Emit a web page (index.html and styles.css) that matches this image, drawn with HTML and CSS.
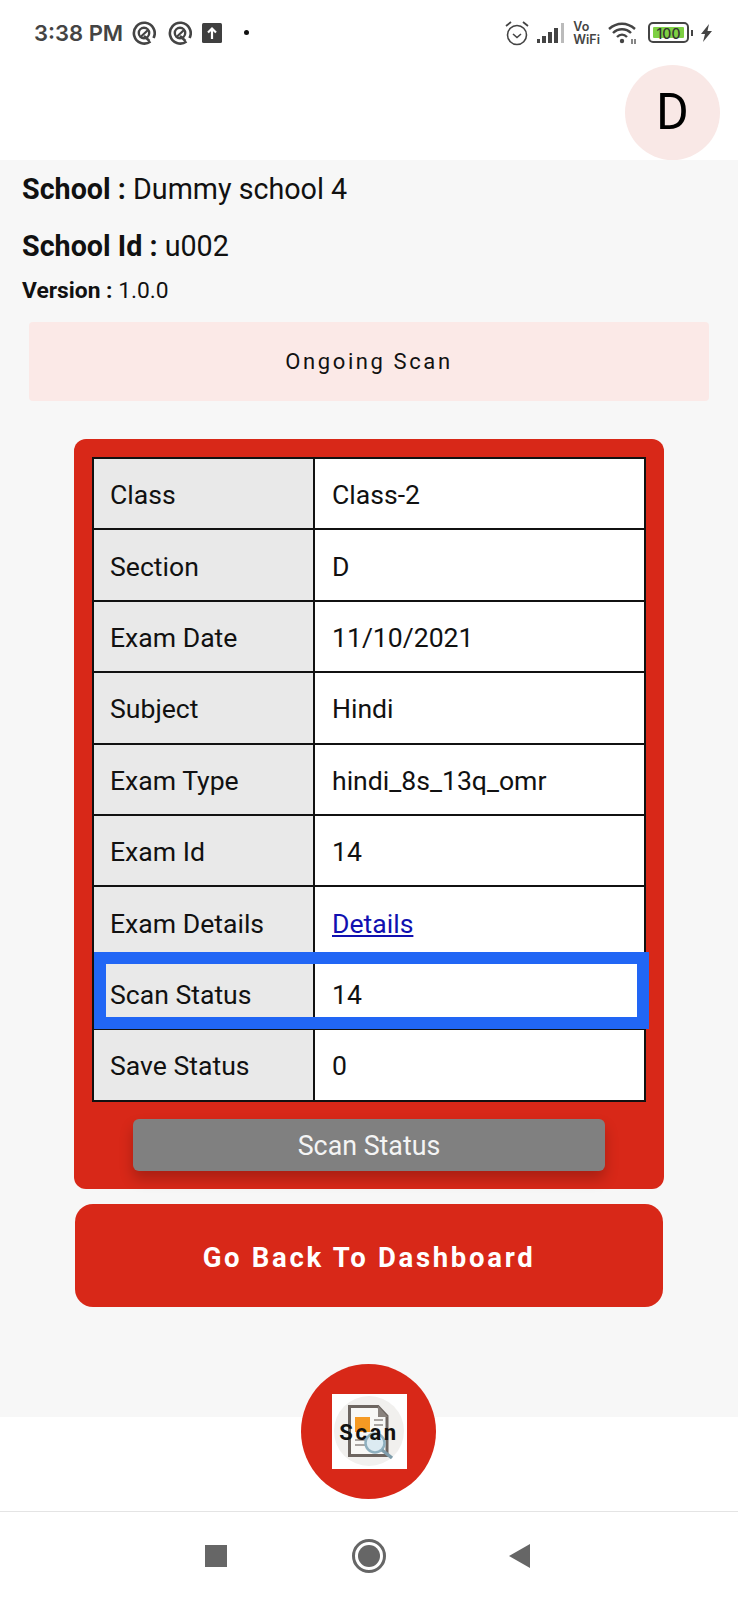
FILE: index.html
```html
<!DOCTYPE html>
<html lang="en">
<head>
    <meta charset="UTF-8">
    <meta name="viewport" content="width=device-width, initial-scale=1.0">
    <title>Ongoing Scan</title>
    <link rel="stylesheet" href="styles.css">
</head>
<body>

    <!-- Phone status bar -->
    <header class="top-bar">
        <div class="status-bar">
            <div class="status-left">
                <span class="clock">3:38 PM</span>
                <svg class="status-icon" width="24" height="24" viewBox="0 0 24 24"><path d="M18.500 20.500A10.400 10.400 0 1 1 21.500 17" fill="none" stroke="#444" stroke-width="2.600"/><circle cx="12" cy="12" r="5.200" fill="none" stroke="#444" stroke-width="2.400"/><path d="M8 16.500L16 9" stroke="#444" stroke-width="2.200" fill="none"/><path d="M12 15l5.500 5" stroke="#444" stroke-width="2.400" fill="none"/></svg>
                <svg class="status-icon second" width="24" height="24" viewBox="0 0 24 24"><path d="M18.500 20.500A10.400 10.400 0 1 1 21.500 17" fill="none" stroke="#444" stroke-width="2.600"/><circle cx="12" cy="12" r="5.200" fill="none" stroke="#444" stroke-width="2.400"/><path d="M8 16.500L16 9" stroke="#444" stroke-width="2.200" fill="none"/><path d="M12 15l5.500 5" stroke="#444" stroke-width="2.400" fill="none"/></svg>
                <svg class="status-icon upload" width="20" height="20" viewBox="0 0 20 20"><rect width="20" height="20" rx="1.500" fill="#3f3f3f"/><path d="M10 16V6M6 9.500L10 5.500l4 4" stroke="#fff" stroke-width="2.200" fill="none"/></svg>
                <span class="dot"></span>
            </div>
            <div class="status-right">
                <svg width="26" height="26" viewBox="0 0 26 26"><circle cx="13" cy="15" r="9.500" fill="none" stroke="#444" stroke-width="1.600"/><path d="M9 14l4 3.500 4-3.500" fill="none" stroke="#444" stroke-width="1.600"/><path d="M2 6l5-4M24 6l-5-4" stroke="#444" stroke-width="1.800"/></svg>
                <svg class="signal" width="28" height="20" viewBox="0 0 28 20"><rect x="0" y="16" width="3" height="4" fill="#444"/><rect x="5" y="13" width="4" height="7" fill="#444"/><rect x="11" y="9" width="4" height="11" fill="#444"/><rect x="17" y="5" width="4" height="15" fill="#444"/><rect x="24" y="0" width="3" height="20" fill="#bbb"/></svg>
                <div class="vowifi">Vo<br>WiFi</div>
                <svg class="wifi" width="30" height="24" viewBox="0 0 30 24"><path d="M1 8c8-7 18-7 26 0M5 12c5-5 13-5 18 0M9 16c3-3 7-3 10 0" fill="none" stroke="#444" stroke-width="2.400"/><circle cx="14" cy="20" r="2.200" fill="#444"/><path d="M24 18v5M27 18v5" stroke="#555" stroke-width="1.400"/></svg>
                <div class="battery"><span class="battery-level">100</span></div>
                <span class="battery-tip"></span>
                <svg class="bolt" width="13" height="18" viewBox="0 0 13 18"><path d="M9 0L1 10h4l-2 8 9-11H7.500z" fill="#444"/></svg>
            </div>
        </div>
        <div class="avatar-row">
            <div class="avatar">D</div>
        </div>
    </header>

    <main class="content">
        <p class="info-line"><strong>School :</strong> Dummy school 4</p>
        <p class="info-line id-line"><strong>School Id :</strong> u002</p>
        <p class="version-line"><strong>Version :</strong> 1.0.0</p>

        <div class="ongoing-box">Ongoing Scan</div>

        <div class="scan-card">
            <div class="scan-table">
                <div class="row"><div class="label">Class</div><div class="value">Class-2</div></div>
                <div class="row"><div class="label">Section</div><div class="value">D</div></div>
                <div class="row"><div class="label">Exam Date</div><div class="value">11/10/2021</div></div>
                <div class="row"><div class="label">Subject</div><div class="value">Hindi</div></div>
                <div class="row"><div class="label">Exam Type</div><div class="value">hindi_8s_13q_omr</div></div>
                <div class="row"><div class="label">Exam Id</div><div class="value">14</div></div>
                <div class="row"><div class="label">Exam Details</div><div class="value"><a href="#">Details</a></div></div>
                <div class="row highlight"><div class="label">Scan Status</div><div class="value">14</div></div>
                <div class="row"><div class="label">Save Status</div><div class="value">0</div></div>
            </div>
            <button type="button" class="status-btn">Scan Status</button>
        </div>

        <button type="button" class="back-btn">Go Back To Dashboard</button>
    </main>

    <footer class="bottom-bar">
        <div class="scan-fab">
            <div class="scan-thumb">
                <svg width="75" height="75" viewBox="0 0 75 75">
                    <circle cx="37" cy="37" r="35" fill="#f1f0ee"/>
                    <path d="M17.500 12.500H46L55 22V61.500H17.500z" fill="#f8f8f6" stroke="#6d6560" stroke-width="3"/>
                    <path d="M46 12V23H56z" fill="#8a837e"/>
                    <rect x="23" y="23" width="15" height="15" fill="#f59a23"/>
                    <path d="M42 26H51M42 31H51M23 46H33M23 51H33" stroke="#a9a5a2" stroke-width="2"/>
                    <circle cx="43" cy="49" r="9.500" fill="#dcebf2" stroke="#8fb0bf" stroke-width="2.500"/>
                    <path d="M50 56L60 64" stroke="#7f9dab" stroke-width="3.500"/>
                </svg>
                <span class="scan-label">Scan</span>
            </div>
        </div>
        <div class="nav-bar">
            <span class="nav-square"></span>
            <span class="nav-circle"></span>
            <span class="nav-back"></span>
        </div>
    </footer>

</body>
</html>
```

FILE: styles.css
```css
html, body {
    margin: 0;
    padding: 0;
}

body {
    width: 738px;
    height: 1600px;
    overflow: hidden;
    font-family: 'Roboto', sans-serif;
    background-color: #fff;
    color: #111;
}

/* top */
.top-bar {
    height: 160px;
    background-color: #fff;
}

.status-bar {
    height: 65px;
    display: flex;
    justify-content: space-between;
    align-items: center;
    padding: 0 25px 0 34px;
    box-sizing: border-box;
}

.status-left,
.status-right {
    display: flex;
    align-items: center;
}

.clock {
    font-family: 'Inter', sans-serif;
    font-size: 22px;
    font-weight: 600;
    color: #444;
    margin-right: 9px;
}

.status-icon.second {
    margin-left: 12px;
}

.status-icon.upload {
    margin-left: 10px;
}

.dot {
    width: 5px;
    height: 5px;
    margin-left: 22px;
    border-radius: 50%;
    background-color: #111;
}

.signal {
    margin-left: 7px;
}

.vowifi {
    margin-left: 8px;
    font-family: 'Inter', sans-serif;
    font-size: 12.500px;
    line-height: 13px;
    font-weight: 600;
    color: #444;
}

.wifi {
    margin-left: 8px;
}

.battery {
    width: 41px;
    height: 21px;
    margin-left: 10px;
    padding: 3px;
    box-sizing: border-box;
    border: 2px solid #444;
    border-radius: 5px;
}

.battery-level {
    display: block;
    height: 100%;
    background-color: #7ed043;
    border-radius: 1px;
    font-family: 'Inter', sans-serif;
    font-size: 14px;
    line-height: 13px;
    font-weight: 500;
    text-align: center;
    color: #333;
}

.battery-tip {
    width: 2px;
    height: 6px;
    margin-left: 2px;
    background-color: #444;
}

.bolt {
    margin-left: 7px;
}

.avatar-row {
    display: flex;
    justify-content: flex-end;
    padding-right: 18px;
}

.avatar {
    width: 95px;
    height: 95px;
    border-radius: 50%;
    background-color: #f9e8e6;
    color: #000;
    font-size: 50px;
    line-height: 95px;
    text-align: center;
}

/* main */
.content {
    height: 1257px;
    padding-top: 1px;
    box-sizing: border-box;
    background-color: #f7f7f7;
}

.info-line {
    margin: 10px 0 0 22px;
    font-size: 28.700px;
    line-height: 36px;
}

.id-line {
    margin-top: 21px;
}

.version-line {
    margin: 13px 0 0 22px;
    font-size: 22.800px;
    line-height: 28px;
}

.ongoing-box {
    width: 680px;
    height: 79px;
    margin: 17px 0 0 29px;
    border-radius: 4px;
    background-color: #fbe9e7;
    font-size: 22px;
    line-height: 79px;
    letter-spacing: 2.600px;
    text-align: center;
}

.scan-card {
    width: 590px;
    height: 750px;
    margin: 38px 0 0 74px;
    padding-top: 18px;
    box-sizing: border-box;
    border-radius: 12px;
    background-color: #d82818;
}

.scan-table {
    width: 554px;
    margin-left: 18px;
    box-sizing: border-box;
    border: 2px solid #111;
    border-bottom: none;
    background-color: #fff;
    font-size: 26.600px;
}

.row {
    position: relative;
    height: 71.400px;
    box-sizing: border-box;
    display: grid;
    grid-template-columns: 221px 1fr;
    border-bottom: 2px solid #111;
}

.label {
    display: flex;
    align-items: center;
    padding: 2px 0 0 16px;
    background-color: #e9e9e9;
    border-right: 2px solid #111;
}

.value {
    display: flex;
    align-items: center;
    padding: 2px 0 0 17px;
}

.value a {
    color: #1010b0;
}

.highlight::after {
    content: '';
    position: absolute;
    top: -7px;
    bottom: -1px;
    left: 0;
    right: -5px;
    border: 12px solid #2166f5;
}

.status-btn {
    display: block;
    width: 472px;
    height: 52px;
    margin: 17px 0 0 59px;
    padding: 3px 0 0;
    border: none;
    border-radius: 6px;
    background-color: #808080;
    box-shadow: 0 8px 14px rgba(0, 0, 0, 0.22);
    color: #f4f4f4;
    font-family: 'Roboto', sans-serif;
    font-size: 26.800px;
}

.back-btn {
    display: block;
    width: 588px;
    height: 103px;
    margin: 15px 0 0 75px;
    padding: 4px 0 0;
    border: none;
    border-radius: 18px;
    background-color: #d82818;
    color: #fff;
    font-family: 'Roboto', sans-serif;
    font-size: 27.500px;
    font-weight: 700;
    letter-spacing: 2.700px;
}

/* bottom */
.bottom-bar {
    position: relative;
    height: 183px;
    padding-top: 94px;
    box-sizing: border-box;
    background-color: #fff;
}

.scan-fab {
    position: absolute;
    top: -53px;
    left: 301px;
    width: 135px;
    height: 135px;
    display: flex;
    align-items: center;
    justify-content: center;
    border-radius: 50%;
    background-color: #d82818;
}

.scan-thumb {
    position: relative;
    width: 75px;
    height: 75px;
    margin-left: 1px;
    background-color: #fff;
}

.scan-label {
    position: absolute;
    top: 27px;
    left: 0;
    width: 100%;
    font-size: 22px;
    line-height: 24px;
    font-weight: 700;
    letter-spacing: 2.600px;
    text-align: center;
    color: #111;
}

.nav-bar {
    height: 89px;
    display: flex;
    justify-content: space-between;
    align-items: center;
    padding: 0 208px 0 205px;
    box-sizing: border-box;
    border-top: 1px solid #e4e4e4;
}

.nav-square {
    width: 22px;
    height: 22px;
    background-color: #666;
}

.nav-circle {
    width: 34px;
    height: 34px;
    margin-left: 2px;
    box-sizing: border-box;
    border: 3px solid #666;
    border-radius: 50%;
    background-color: #666;
    background-clip: content-box;
    padding: 3px;
}

.nav-back {
    width: 0;
    height: 0;
    border-top: 12.500px solid transparent;
    border-bottom: 12.500px solid transparent;
    border-right: 21px solid #666;
}
```
